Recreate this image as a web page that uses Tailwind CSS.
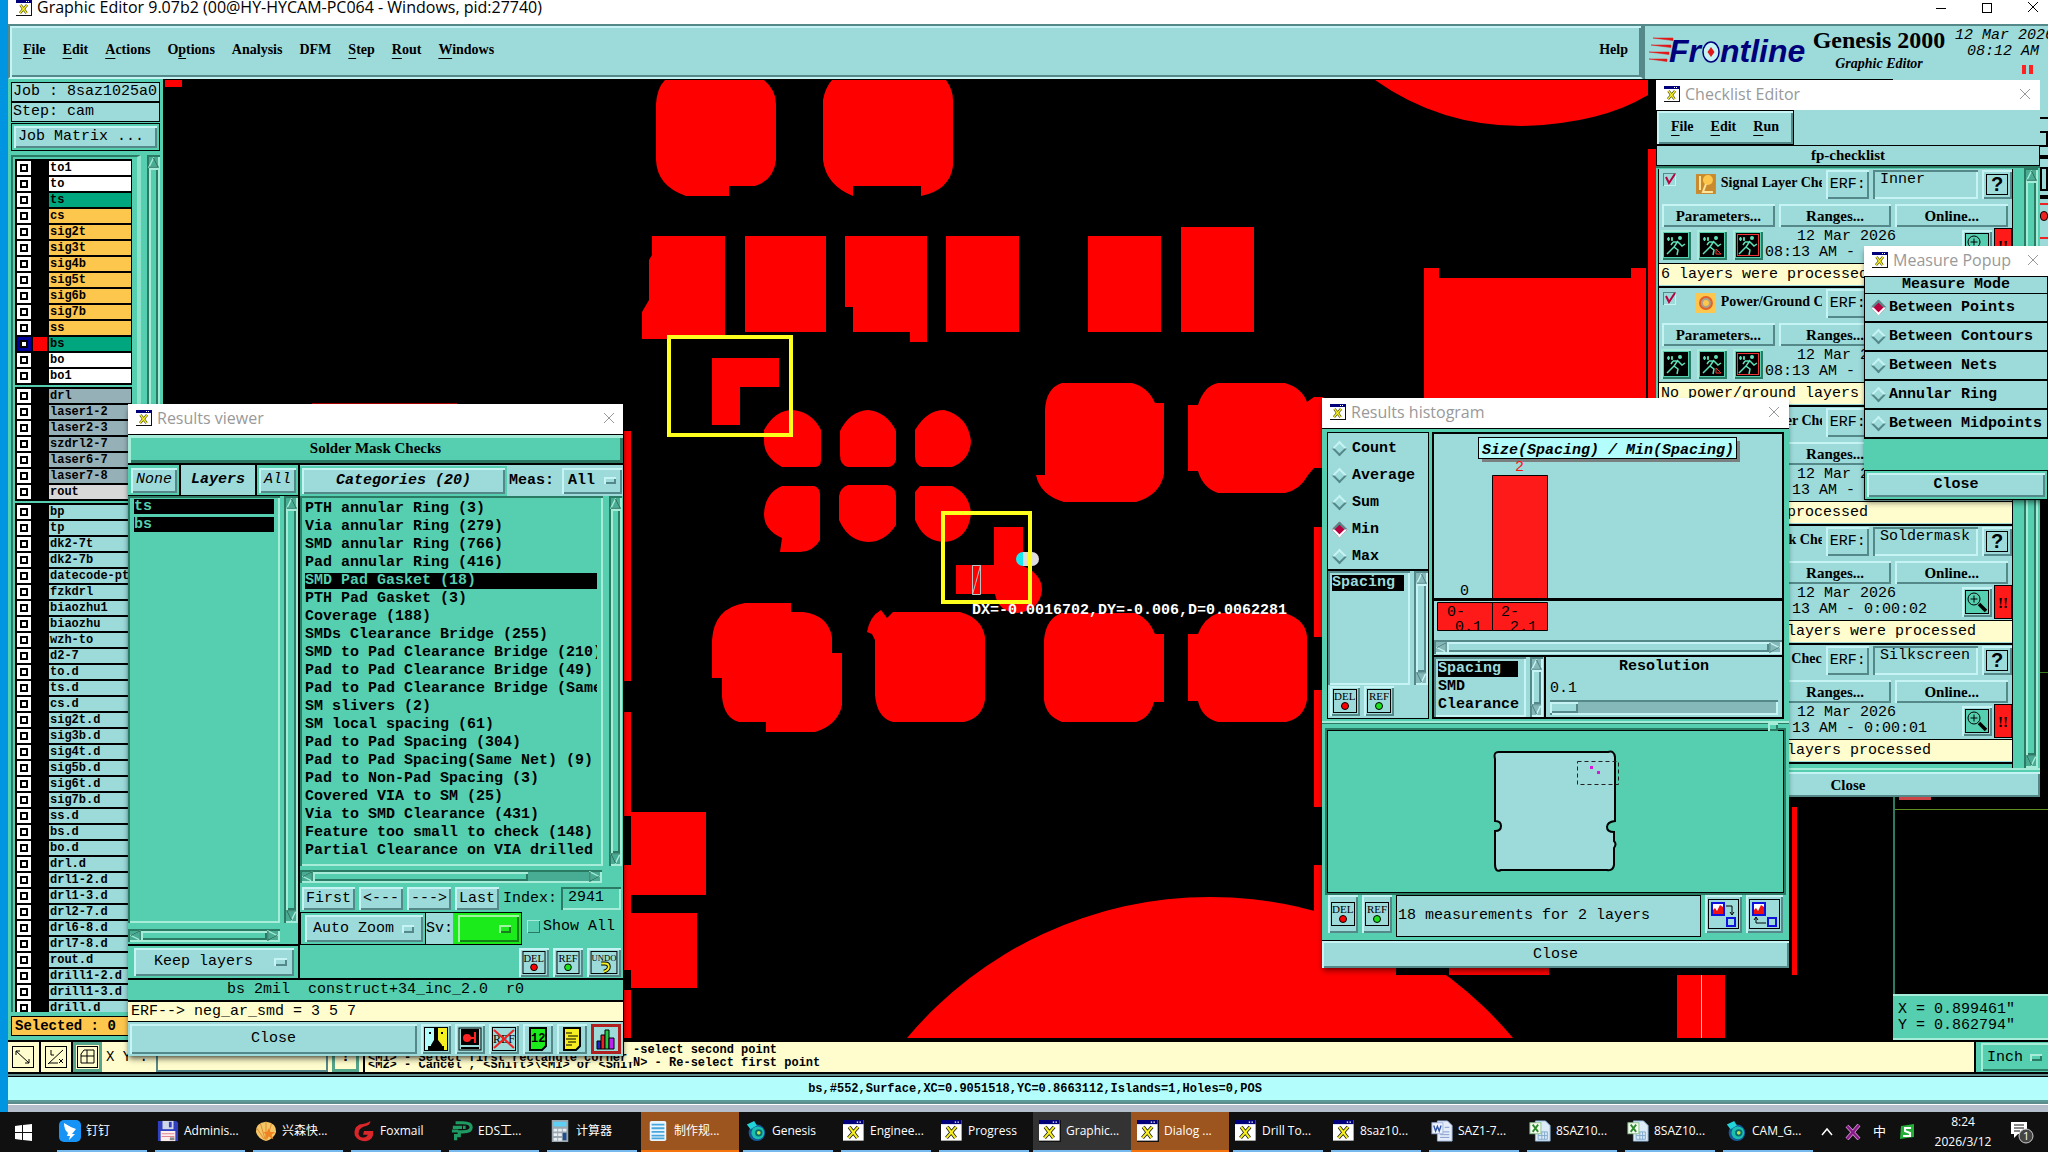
<!DOCTYPE html>
<html lang="en">
<head>
  <meta charset="UTF-8" />
  <meta name="viewport" content="width=device-width, initial-scale=1.0"/>
  <title>Graphic Editor 9.07b2</title>
  <script src="https://cdn.jsdelivr.net/npm/@tailwindcss/browser@4"></script>
</head>
<body class="relative flex h-screen flex-col overflow-hidden bg-[#0095e0] font-['Liberation_Mono',monospace] text-[15px] leading-[18px] text-black [--up:inset_2px_2px_#c6f3f3,inset_-2px_-2px_#558888] [--down:inset_2px_2px_#558888,inset_-2px_-2px_#c6f3f3] [--gup:inset_2px_2px_#a6ecd9,inset_-2px_-2px_#2a7a64] [--gdown:inset_2px_2px_#2a7a64,inset_-2px_-2px_#a6ecd9]">

  <!-- Shared icons -->
  <svg class="hidden">
    <symbol id="xwin" viewBox="0 0 16 16">
      <rect width="16" height="16" fill="#111"/><rect x="0" y="0" width="15" height="15" fill="#fff"/>
      <rect width="15" height="3" fill="#00007b"/><path d="M10 1.5h1M12 1.5h1" stroke="#fff"/>
      <path d="M4.500 5l6 8M11 5l-7 8" stroke="#111" stroke-width="2.600"/><path d="M4.500 5l6 8M11 5l-7 8" stroke="#f5ee20" stroke-width="1.600"/>
    </symbol>
    <symbol id="close" viewBox="0 0 12 12"><path d="M1 1l10 10M11 1L1 11" stroke="currentColor" fill="none"/></symbol>
    <symbol id="del" viewBox="0 0 24 24">
      <rect x=".5" y=".5" width="23" height="23" fill="none" stroke="#000"/><text x="1" y="11" font-size="11" font-family="Liberation Serif">DEL</text>
      <circle cx="12" cy="17" r="3.500" fill="#f00" stroke="#000"/>
    </symbol>
    <symbol id="ref" viewBox="0 0 24 24">
      <rect x=".5" y=".5" width="23" height="23" fill="none" stroke="#000"/><text x="2" y="11" font-size="11" font-family="Liberation Serif">REF</text>
      <circle cx="12" cy="17" r="3.500" fill="#1ee01e" stroke="#000"/>
    </symbol>
    <symbol id="undo" viewBox="0 0 28 24">
      <rect x=".5" y=".5" width="27" height="23" fill="none" stroke="#000"/><text x="1" y="10" font-size="9" font-family="Liberation Serif">UNDO</text>
      <path d="M11 13h4q4 0 4 3.500t-5 5" fill="none" stroke="#000" stroke-width="4"/><path d="M11 13h4q4 0 4 3.500t-5 5" fill="none" stroke="#f5ee20" stroke-width="2"/>
    </symbol>
    <symbol id="magnify" viewBox="0 0 24 24">
      <rect x=".5" y=".5" width="23" height="23" fill="#55cfb0" stroke="#000"/>
      <circle cx="9" cy="9" r="6" fill="none" stroke="#000"/><path d="M9 5.500v7M5.500 9h7" stroke="#000"/><path d="M14 14l7 7" stroke="#000" stroke-width="3.500"/>
    </symbol>
    <symbol id="runner" viewBox="0 0 24 24">
      <circle cx="16" cy="5" r="2" fill="#5fe0b8"/>
      <path d="M14 8l-4 6 4 3-1 5M10 14l-3 3-4 4M9 9l5 0 4 4 3-2M9 9l-2 3M3 6h3M7 6h2M4.500 4v4M8 4v4" fill="none" stroke="#5fe0b8" stroke-width="1.500"/>
    </symbol>
    <symbol id="genesis" viewBox="0 0 24 24">
      <circle cx="13" cy="14" r="9" fill="#155a9a"/><circle cx="14" cy="14" r="7" fill="#19c0b0"/><circle cx="15" cy="14" r="4" fill="#0c6a70"/>
      <circle cx="15" cy="14" r="2" fill="#b7e84a"/><path d="M2 5l8-4 3 5-7 4z" fill="#22d3d8"/>
    </symbol>
    <symbol id="xls" viewBox="0 0 24 24">
      <path d="M7 1h11l5 5v17H7z" fill="#dcebf8" stroke="#8fb4d8"/><path d="M10 13h10v8H10zM10 17h10M14 13v8M17 13v8" fill="none" stroke="#7ea6cc"/>
      <rect x="1" y="3" width="12" height="12" fill="#f3fbf0" stroke="#8cc08c"/><path d="M4 5l6 8M10 5l-6 8" stroke="#2d8a2d" stroke-width="2"/>
    </symbol>
    <symbol id="doc" viewBox="0 0 24 24">
      <path d="M7 1h11l5 5v17H7z" fill="#e4ecfa" stroke="#9fb4dc"/><path d="M10 13h10M10 16h10M10 19h10M15 8h5" stroke="#7d97cc"/>
      <rect x="1" y="3" width="12" height="12" fill="#eef3ff" stroke="#9fb4dc"/><path d="M3 6l2 6 2-5 2 5 2-6" fill="none" stroke="#2f56a8" stroke-width="1.500"/>
    </symbol>
    <symbol id="ding" viewBox="0 0 22 22"><rect width="22" height="22" rx="5" fill="#1793f5"/><path d="M5 3q6 4 12 6l-4 5h3l-6 6 1-4H8l1-3q-4-3-4-10z" fill="#fff"/></symbol>
    <symbol id="floppy" viewBox="0 0 24 24"><path d="M1 1h20l2 2v20H1z" fill="#2f3fc0"/><rect x="6" y="1" width="12" height="9" fill="#cfd6e8"/><rect x="13" y="2" width="3" height="6" fill="#2f3fc0"/><rect x="4" y="12" width="16" height="11" fill="#fbeeee"/><path d="M5 15h14M5 18h14" stroke="#e07a8a"/><rect x="14" y="19" width="5" height="3" fill="#888"/></symbol>
    <symbol id="shell" viewBox="0 0 24 24"><path d="M12 2q11 1 11 11-2 7-11 10Q3 20 1 13 1 3 12 2z" fill="#f6c566"/><path d="M12 2v20M6 4l5 17M18 4l-5 17M2 9l8 12" stroke="#d98a2c" fill="none"/><path d="M15 9l2 4 5 0-4 3 2 5-5-3-4 3 1-5-3-3h4z" fill="#f08322"/></symbol>
    <symbol id="fox" viewBox="0 0 24 24"><path d="M19 1q0 5-7 6-6 2-6 8 1 5 6 4 4-1 4-3h-5l1-4h10q1 9-7 11-9 1-13-6Q0 9 7 5q8-1 12-4z" fill="#d8262a"/></symbol>
    <symbol id="eds" viewBox="0 0 24 24"><path d="M5 3h8q9 0 9 5t-9 5H9v4H5v5M2 8h10M1 12h7M13 8h3" fill="none" stroke="#1f9a62" stroke-width="3.500"/></symbol>
    <symbol id="calc" viewBox="0 0 18 24"><rect width="18" height="24" fill="#9aa7b1"/><rect x="2" y="2" width="14" height="5" fill="#5ed0f5"/><path d="M2 11h4M7 11h4M12 11h4M2 16h4M7 16h4M2 21h4M7 21h4" stroke="#e8eef2" stroke-width="3"/><path d="M12 14h4v8h-4z" fill="#1f4f8a"/></symbol>
    <symbol id="note" viewBox="0 0 20 24"><rect x="1" y="1" width="18" height="22" rx="2" fill="#eaf6ff"/><path d="M3 5h14M3 9h14M3 13h14M3 17h14M3 20h14" stroke="#49a6dc" stroke-width="2"/></symbol>
  </svg>

  <!-- Main window -->
  <div class="ml-2 flex min-h-0 flex-1 flex-col bg-black">
    <header class="flex h-6 shrink-0 items-start bg-white font-['Open_Sans',sans-serif]">
      <svg class="ml-2 size-4"><use href="#xwin"/></svg>
      <h1 class="ml-[5px] text-base leading-[14px]">Graphic Editor 9.07b2 (00@HY-HYCAM-PC064 - Windows, pid:27740)</h1>
      <div class="ml-auto flex gap-[34px] pr-[9px]">
        <button aria-label="Minimize"><svg class="size-3" viewBox="0 0 12 12"><path d="M1 7.500h10" stroke="#000"/></svg></button>
        <button aria-label="Maximize"><svg class="size-3" viewBox="0 0 12 12"><rect x="1.500" y="2.500" width="9" height="9" fill="none" stroke="#000"/></svg></button>
        <button aria-label="Close"><svg class="mt-px size-3"><use href="#close"/></svg></button>
      </div>
    </header>

    <div class="flex h-[55px] shrink-0 bg-[#9ddada] font-['Liberation_Serif',serif] font-bold">
      <nav class="flex flex-1 items-center gap-[17px] border-2 border-[#558888] border-b-[#c6f3f3] px-[13px] pb-[3px] text-sm [box-shadow:var(--up)]">
        <button><u class="underline-offset-4">F</u>ile</button>
        <button><u class="underline-offset-4">E</u>dit</button>
        <button><u class="underline-offset-4">A</u>ctions</button>
        <button>O<u class="underline-offset-4">p</u>tions</button>
        <button>Analysis</button>
        <button>DFM</button>
        <button><u class="underline-offset-4">S</u>tep</button>
        <button><u class="underline-offset-4">R</u>out</button>
        <button><u class="underline-offset-4">W</u>indows</button>
        <button class="ml-auto">Help</button>
      </nav>
      <div class="flex w-[405px] shrink-0 overflow-hidden border-t-2 border-l-2 border-[#558888] pl-1">
        <svg class="mt-[6px] h-9 w-[162px] shrink-0" viewBox="0 0 162 36">
          <path d="M4 6h20v2.500zM2 13h20v2.500zM0 20h20v2.500zM0 27h18v2.500z" fill="#e01818" stroke="#e01818" stroke-width=".5"/>
          <g font-family="Liberation Sans" font-weight="bold" font-style="italic" font-size="32" fill="#00007b">
            <text x="20" y="30">Fr</text><text x="71" y="30">ntline</text>
          </g>
          <ellipse cx="62" cy="20" rx="8" ry="10" fill="#c6f3f3" stroke="#00007b" stroke-width="1.500"/><path d="M62 15l3.500 5-3.500 5-3.500-5z" fill="#e01818"/>
        </svg>
        <div class="w-[136px] shrink-0 text-center">
          <p class="text-2xl leading-7 whitespace-nowrap">Genesis 2000</p>
          <p class="text-sm leading-5 italic">Graphic Editor</p>
        </div>
        <div class="ml-2 w-[97px] shrink-0 pt-px font-['Liberation_Mono',monospace] leading-4 font-normal italic">
          <p class="mt-px whitespace-nowrap">12 Mar 2026</p>
          <p class="pl-3">08:12 AM</p>
          <div class="ml-[67px] mt-[5px] flex gap-[3px]"><span class="h-[9px] w-1 bg-[#f22]"></span><span class="h-[9px] w-1 bg-[#f22]"></span></div>
        </div>
      </div>
    </div>

    <div class="flex min-h-0 flex-1">
      <!-- Layer list -->
      <aside class="flex w-[155px] shrink-0 flex-col bg-[#55cfb0] px-[3px] pt-[3px]">
        <p class="h-5 border border-black bg-[#9ddada] pl-px">Job : 8saz1025a0</p>
        <p class="h-5 border border-black bg-[#9ddada] pl-px">Step: cam</p>
        <div class="mt-px border border-black p-[2px]">
          <button class="block h-[22px] w-full bg-[#9ddada] pl-1 text-left [box-shadow:var(--up)]">Job Matrix ...</button>
        </div>
        <div class="mt-1 flex min-h-0 flex-1">
          <div class="min-h-0 w-[131px] overflow-hidden border-t-2 border-r-4 border-l-2 border-t-[#2a7a64] border-r-[#8be3cb] border-l-[#2a7a64] pt-[2px] pr-[5px] pl-[2px]">
            <div id="layers" class="text-xs leading-[14px] font-bold"></div>
          </div>
          <div data-bar="gv" data-fill="100" class="ml-[6px] w-[13px]"></div>
        </div>
        <p class="my-1 h-5 border border-black bg-[#fdc64d] pl-[3px] text-sm leading-[18px] font-bold">Selected : 0</p>
      </aside>

      <!-- Artwork -->
      <div class="relative min-w-0 flex-1 overflow-hidden bg-black">
        <svg class="h-[959px] w-[1730px]" viewBox="163 79 1730 959" fill="#f00">
          <rect x="165" y="80" width="17" height="7"/>
          <rect x="312" y="403" width="145" height="3" fill="#a00"/>
          <path d="M665 80H764Q776 90 776 104V160Q774 180 755 186H729V196H686Q657 186 656 160V104Q657 88 665 80z"/>
          <path d="M832 80H946Q953 90 953 100V166Q950 190 921 196V186H853V196Q826 185 823 160V100Q825 88 832 80z"/>
          <path d="M652 236H725V339H642V312L649 300V260L652 255z"/>
          <path d="M745 236h81v96h-81zM946 236h73v96h-73zM1088 236h73v96h-73zM1181 227h73v105h-73z"/>
          <path d="M845 236H927V342H910V332H853V307H845z"/>
          <path d="M712 358H779V387H740V425H712z"/>
          <path d="M793 410Q812 412 821 430V460Q821 467 815 467H782Q764 457 764 441V430Q775 410 793 410z"/>
          <path d="M868 410Q887 412 896 431V460Q894 467 888 467H848Q840 465 840 455V431Q850 411 868 410z"/>
          <path d="M944 410Q968 416 971 441Q970 460 952 467H922Q915 465 915 456V430Q927 410 944 410z"/>
          <path d="M782 486H814Q820 488 820 494V540Q813 552 800 552H780L782 538Q764 530 764 514Q765 493 782 486z"/>
          <path d="M848 485H887Q896 487 896 496V525Q885 542 868 542Q850 541 841 524L839 520V496Q840 488 848 485z"/>
          <path d="M920 486H952Q970 494 971 514Q968 540 944 542Q925 541 917 524L915 520V492z"/>
          <path d="M1062 383H1132Q1148 387 1155 403H1164V474Q1160 495 1136 502H1064Q1040 495 1036 475H1045V410Q1046 388 1062 383z"/>
          <path d="M1218 383H1285Q1302 388 1307 402L1314 397H1323V468H1314L1308 475Q1300 490 1285 493H1218Q1203 488 1198 471H1188V405H1198Q1204 386 1218 383z"/>
          <path d="M745 603H791V612H803Q828 615 832 637V653H842V705Q838 725 815 732H766V722H739Q724 718 722 697V678H712V640Q714 608 745 603z"/>
          <path d="M881 610L887 618L893 612H960Q982 618 985 637V700Q982 718 964 722H893Q877 718 875 695V640L872 634L867 632Q870 616 881 610z"/>
          <path d="M1062 613H1136Q1150 620 1155 634H1164V702H1154Q1150 718 1136 722H1062Q1046 716 1044 700V640Q1046 618 1062 613z"/>
          <path d="M1218 613H1285Q1306 620 1307 637V700Q1304 718 1286 722H1218Q1202 718 1198 701H1188V634H1198Q1204 618 1218 613z"/>
          <path d="M994 527H1023V566Q1042 574 1042 590Q1040 610 1018 613Q998 612 995 594H956V565H994z"/>
          <path d="M623 431h8v250h-8zM623 712h8v104h-8zM623 865h8v105h-8zM623 990h8v48h-8zM631 812h75v83h-75zM631 913h66v75h-66z"/>
          <path d="M1314 527h10v110h-10zM1314 690h10v117h-10zM1314 865h10v60h-10z"/>
          <path d="M1375 80Q1440 126 1521 126Q1600 124 1648 95V80z"/>
          <path d="M1648 149h8v260h-8zM1424 268H1439V278H1631V268H1646V420H1424z"/>
          <path d="M907 1038A396 396 0 0 1 1513 1038z"/>
          <rect x="1396" y="960" width="52" height="15" fill="#000"/>
          <path d="M1449 960h100v15h-100zM1792 807h5v168h-5zM1677 975h48v63h-48z"/>
          <path d="M1701.500 975v63" stroke="#ccd"/>
          <path d="M1023 552h9a7 7 0 0 1 0 14h-9z" fill="#ddd"/><path d="M1023 552v14a7 7 0 0 1 0-14z" fill="#18e8f0"/>
          <path d="M972.500 565.500h8v29h-8zl8 0l-8 29" fill="none" stroke="#b9c4c4"/>
          <g fill="none" stroke="#ffff1e" stroke-width="4"><rect x="669" y="337" width="122" height="98"/><rect x="943" y="513" width="87" height="89"/></g>
          <text x="972" y="614" fill="#fff" font-size="15" font-weight="bold">DX=-0.0016702,DY=-0.006,D=0.0062281</text>
        </svg>
      </div>

      <!-- Tool column and overview -->
      <aside class="flex w-[155px] shrink-0 flex-col">
        <div class="h-[400px] bg-[#9ddada]">
          <div class="h-10 border-b-2 border-black"></div>
          <div class="h-10 border-b-4 border-black pt-3 text-right"><span class="inline-block h-4 w-5 border-2 border-black"></span></div>
          <div class="h-10 border-b-4 border-black pt-2 text-right"><span class="inline-block h-6 w-2 border-2 border-black"></span></div>
          <div class="mt-1 h-9 border-y-2 border-[#e22] bg-[#9ddada] pt-1 text-right"><span class="inline-block h-[10px] w-2 rounded-full border border-black bg-[#e22]"></span></div>
        </div>
        <div class="flex flex-1 flex-col border-l-2 border-[#2a7a64]">
          <div class="h-[194px] border-b border-[#3c7a1e]"></div>
          <div class="h-[137px] border-b border-[#5f8f1e] pt-[124px]"><span class="ml-1 block h-[3px] w-8 bg-[#c44]"></span></div>
        </div>
        <div class="h-[46px] bg-[#55cfb0] pt-2 pl-[5px] leading-4 whitespace-nowrap [box-shadow:inset_0_2px_#a6ecd9,inset_0_-2px_#a6ecd9]">
          <p>X = 0.899461"</p>
          <p>Y = 0.862794"</p>
        </div>
      </aside>
    </div>

    <!-- Command line -->
    <div class="flex h-[34px] shrink-0 border-y-2 border-black bg-[#fffdcd] text-xs leading-[13px] font-bold">
      <button aria-label="Pan" class="w-[33px] border-r-2 border-black p-1"><svg class="h-[22px] w-6" viewBox="0 0 24 22"><rect x=".5" y=".5" width="21" height="21" fill="none" stroke="#000"/><path d="M4 5l13 12M4 9V5h4M17 13v4h-4" fill="none" stroke="#000"/></svg></button>
      <button aria-label="Delta" class="w-8 border-r-2 border-black p-1"><svg class="h-[22px] w-6" viewBox="0 0 24 22"><rect x=".5" y=".5" width="21" height="21" fill="none" stroke="#000"/><path d="M3 18L18 4M6 4v5h3M4 17h9M14 13l4 4M18 13l-4 4" fill="none" stroke="#000"/></svg></button>
      <button aria-label="Grid" class="w-[29px] bg-[#fffdcd] p-1 [box-shadow:inset_0_0_0_3px_#55a58b]"><svg class="size-[22px]" viewBox="0 0 22 22"><rect x=".5" y=".5" width="20" height="21" fill="none" stroke="#000"/><path d="M7 4h10v13H4V8zM4 10h13M10 4v13" fill="none" stroke="#000"/></svg></button>
      <label for="xy" class="self-center px-1 text-sm font-normal">X Y :</label>
      <input id="xy" class="ml-1 h-full w-[172px] border-2 border-[#558888] bg-[#fffdcd]" />
      <button class="mx-1 w-[27px] border-3 border-[#55a58b] text-base">!</button>
      <div class="w-[270px] shrink-0 overflow-hidden border-l-2 border-black pt-[10px] pl-[3px] whitespace-nowrap">
        <p class="h-[10px] overflow-hidden">&lt;M1&gt; - Select first rectangle corner</p>
        <p class="h-2 overflow-hidden leading-[6px]">&lt;M2&gt; - Cancel , &lt;Shift&gt;\&lt;M1&gt; or &lt;Shift&gt;\</p>
      </div>
      <div class="flex-1 pt-[2px] whitespace-nowrap">
        <p>-select second point</p>
        <p>N&gt; - Re-select first point</p>
      </div>
      <div class="flex w-[74px] items-center border-l-2 border-black bg-[#55cfb0] pl-[5px]">
        <div class="flex h-7 w-[78px] shrink-0 items-center pl-[6px] [box-shadow:var(--gup)]">
          <select aria-label="Units" class="w-[43px] appearance-none text-[15px] font-normal"><option>Inch</option></select>
          <span class="h-[7px] w-3 bg-[#55cfb0] [box-shadow:var(--gup)]"></span>
        </div>
      </div>
    </div>
    <p class="h-[30px] shrink-0 border-y-2 border-[#5c8c8c] bg-[#b4fdfd] pl-[14px] text-center text-xs leading-[27px] font-bold [box-shadow:inset_0_1px_#000,inset_0_-2px_#5c9a98]">bs,#552,Surface,XC=0.9051518,YC=0.8663112,Islands=1,Holes=0,POS</p>
    <div class="h-2 shrink-0 border-t border-white bg-[#b5bfcb]"></div>
  </div>

  <!-- Taskbar -->
  <footer class="flex h-10 shrink-0 items-stretch bg-[#101010] font-['Open_Sans','Noto_Sans_CJK_SC',sans-serif] text-xs text-white">
    <button aria-label="Start" class="w-[53px] shrink-0 pl-[15px]"><svg class="size-[17px]" viewBox="0 0 17 17"><path d="M0 2l7-1v7H0zM8 1l9-1v8H8zM0 9h7v7l-7-1zM8 9h9v8l-9-1z" fill="#fff"/></svg></button>
    <div id="tasks" class="flex min-w-0 flex-1 overflow-hidden"></div>
    <div class="flex shrink-0 items-center gap-3 pr-[14px]">
      <svg class="h-3 w-3" viewBox="0 0 12 12"><path d="M1 9l5-6 5 6" fill="none" stroke="#fff" stroke-width="1.500"/></svg>
      <svg class="size-4" viewBox="0 0 16 16"><path d="M2 2l12 13M14 1L2 15" stroke="#c9c" stroke-width="4"/><path d="M2 2l12 13M14 1L2 15" stroke="#8a1a8a" stroke-width="2.500"/></svg>
      <span class="text-[13px]">中</span>
      <svg class="size-[18px]" viewBox="0 0 18 18"><path d="M3 3l13-2v13L2 16z" fill="#25b03a"/><path d="M13 5H7v3l5 2v3H5" fill="none" stroke="#fff" stroke-width="2"/></svg>
      <div class="w-[70px] text-center leading-5"><p>8:24</p><p>2026/3/12</p></div>
      <svg class="size-6" viewBox="0 0 24 24"><path d="M1 2h16v12H8l-4 4v-4H1z" fill="#fff"/><path d="M4 5h10M4 8h10M4 11h6" stroke="#101010"/><circle cx="16" cy="16" r="7" fill="#444" stroke="#ccc"/><text x="13" y="20" font-size="11" fill="#fff">1</text></svg>
    </div>
  </footer>

  <!-- Checklist Editor -->
  <section class="absolute top-20 left-[1656px] w-[384px] bg-[#55cfb0] font-['Liberation_Serif',serif]">
    <div class="flex h-[30px] items-center bg-white pr-[9px] pb-[2px] pl-2 font-['Open_Sans',sans-serif] text-[#999]">
      <svg class="size-4"><use href="#xwin"/></svg><h2 class="ml-[5px] text-base">Checklist Editor</h2>
      <button aria-label="Close" class="ml-auto"><svg class="size-3"><use href="#close"/></svg></button>
    </div>
    <div class="h-[35px] bg-[#9ddada]">
      <nav class="flex h-[35px] w-[138px] items-center gap-[17px] border border-black pb-px pl-[14px] text-sm font-bold [box-shadow:var(--up)]">
        <button><u class="underline-offset-4">F</u>ile</button><button><u class="underline-offset-4">E</u>dit</button><button><u class="underline-offset-4">R</u>un</button>
      </nav>
    </div>
    <p class="h-[21px] border border-black bg-[#9ddada] text-center leading-[18px] font-bold">fp-checklist</p>
    <div class="flex h-[602px] border-t-2 border-[#2a7a64]">
      <div id="checks" class="mt-px mr-[11px] ml-[2px] w-[355px] border-x border-black"></div>
      <div data-bar="gv" data-fill="100" class="w-[14px]"></div>
    </div>
    <div class="border-t-2 border-[#a6ecd9] pt-[2px]">
      <button class="block h-[25px] w-full bg-[#9ddada] font-bold [box-shadow:var(--up)]">Close</button>
    </div>
  </section>

  <!-- Measure Popup -->
  <section class="absolute top-[246px] left-[1864px] w-[184px] bg-[#55cfb0] font-bold shadow-md shadow-black/40">
    <div class="flex h-[30px] items-center bg-white pr-[9px] pb-[2px] pl-2 font-['Open_Sans',sans-serif] font-normal text-[#999]">
      <svg class="size-4"><use href="#xwin"/></svg><h2 class="ml-[5px] text-base">Measure Popup</h2>
      <button aria-label="Close" class="ml-auto"><svg class="size-3"><use href="#close"/></svg></button>
    </div>
    <p class="h-[18px] border border-black bg-[#9ddada] text-center leading-4">Measure Mode</p>
    <div id="modes"></div>
    <div class="mt-[31px] border border-black p-[2px]">
      <button class="block h-6 w-full bg-[#9ddada] [box-shadow:var(--up)]">Close</button>
    </div>
  </section>

  <!-- Results histogram -->
  <section class="absolute top-[398px] left-[1322px] w-[467px] bg-[#55cfb0] shadow-md shadow-black/40">
    <div class="flex h-[30px] items-center bg-white pr-[9px] pb-[2px] pl-2 font-['Open_Sans',sans-serif] text-[#999]">
      <svg class="size-4"><use href="#xwin"/></svg><h2 class="ml-[5px] text-base">Results histogram</h2>
      <button aria-label="Close" class="ml-auto"><svg class="size-3"><use href="#close"/></svg></button>
    </div>
    <div class="flex h-[293px] gap-[3px] border-t border-black px-[5px] pt-[3px] pb-[2px]">
      <div class="flex w-[102px] flex-col border border-black bg-[#9ddada]">
        <div id="stats" class="h-[138px] border-b-2 border-black pt-[2px] font-bold"></div>
        <div class="flex h-[114px]">
          <ul class="mr-1 w-[82px] pt-[4px] pl-1 font-bold [box-shadow:var(--down)]"><li class="h-4 w-[72px] bg-black leading-4 text-[#9ddada]">Spacing</li></ul>
          <div data-bar="tv" data-fill="100" class="w-[14px]"></div>
        </div>
        <div class="flex gap-1 pt-px pl-[2px]">
          <button aria-label="Delete" class="bg-[#9ddada] p-[3px] [box-shadow:var(--up)]"><svg class="size-6"><use href="#del"/></svg></button>
          <button aria-label="Reference" class="bg-[#9ddada] p-[3px] [box-shadow:var(--up)]"><svg class="size-6"><use href="#ref"/></svg></button>
        </div>
      </div>
      <div class="flex min-w-0 flex-1 flex-col border-2 border-black bg-[#9ddada]">
        <svg class="h-[203px] w-full" viewBox="1434 434 348 203">
          <rect x="1482" y="441" width="258" height="21" fill="#7a8080"/><rect x="1478.500" y="437.500" width="258" height="21" fill="#b4fdfd" stroke="#000"/>
          <text x="1482" y="454" font-size="15" font-weight="bold" font-style="italic">Size(Spacing) / Min(Spacing)</text>
          <text x="1515" y="471" font-size="15" fill="#f11">2</text><text x="1460" y="595" font-size="15">0</text>
          <g fill="#ff1a1a" stroke="#000"><path d="M1492.500 475.500h55v124h-55zM1437.500 602.500h55v28h-55zM1492.500 602.500h55v28h-55z"/></g>
          <path d="M1432 598h360v3h-360z" fill="#000"/>
          <g font-size="15"><text x="1447" y="616">0-</text><text x="1455" y="631">0.1</text><text x="1501" y="616">2-</text><text x="1510" y="631">2.1</text></g>
        </svg>
        <div data-bar="th" data-fill="100" class="mt-[3px] h-[14px]"></div>
        <div class="mt-px flex h-[62px] border-t-2 border-black">
          <ul class="mr-1 w-[92px] pt-1 pl-1 font-bold [box-shadow:var(--down)]">
            <li class="h-4 w-20 bg-black leading-4 text-[#9ddada]">Spacing</li><li class="mt-px">SMD</li><li>Clearance</li>
          </ul>
          <div data-bar="tv" data-fill="100" class="w-[13px]"></div>
          <div class="ml-px flex-1 border-l-2 border-black px-1 font-bold">
            <label for="res" class="block text-center leading-5">Resolution</label>
            <p class="mt-[3px] font-normal">0.1</p>
            <input id="res" type="range" value="0" class="mt-[2px] block h-[15px] w-full appearance-none bg-[#85b8b8] [box-shadow:var(--down)] [&::-webkit-slider-thumb]:h-[11px] [&::-webkit-slider-thumb]:w-7 [&::-webkit-slider-thumb]:appearance-none [&::-webkit-slider-thumb]:bg-[#9ddada] [&::-webkit-slider-thumb]:[box-shadow:var(--up)]" />
          </div>
        </div>
      </div>
    </div>
    <div class="flex h-[9px] items-center justify-end border-t-2 border-[#a6ecd9] pr-[11px] [box-shadow:inset_0_1px_#2a7a64]"><span class="h-2 w-[10px] bg-[#55cfb0] [box-shadow:var(--gup)]"></span></div>
    <div class="mx-[5px] flex h-[163px] justify-center border border-black [box-shadow:0_0_0_2px_#2a7a64]">
      <svg class="h-full w-[140px]" viewBox="1486 731 140 161">
        <path d="M1500 752h108q6-2 7 5v64q-8 1-8 6t7 5v9q3 3 0 7v17q-1 6-7 5h-106q-6 3-6-6v-33q6 0 6-5t-6-5v-62q-2-8 5-7z" fill="#9ddada" stroke="#000" stroke-width="2"/>
        <rect x="1577.500" y="761.500" width="41" height="23" fill="none" stroke="#222" stroke-dasharray="4 3"/>
        <path d="M1590 766h3v3h-3zM1597 771h3v3h-3z" fill="#d818d8"/>
      </svg>
    </div>
    <div class="flex h-[47px] gap-1 px-[6px] pt-[2px]">
      <button aria-label="Delete" class="h-[38px] w-[30px] bg-[#9ddada] pl-[3px] [box-shadow:var(--up)]"><svg class="size-6"><use href="#del"/></svg></button>
      <button aria-label="Reference" class="h-[38px] w-[30px] bg-[#9ddada] pl-[3px] [box-shadow:var(--up)]"><svg class="size-6"><use href="#ref"/></svg></button>
      <p class="h-[42px] flex-1 border border-black bg-[#9ddada] pl-px leading-10">18 measurements for 2 layers</p>
      <button aria-label="Export" class="h-[38px] w-[37px] bg-[#9ddada] pl-[3px] [box-shadow:var(--up)]"><svg class="h-[30px] w-[31px]" viewBox="0 0 31 30"><rect x=".5" y=".5" width="30" height="29" fill="none" stroke="#000"/><rect x="4" y="4" width="12" height="12" fill="#fff" stroke="#11d" stroke-width="2"/><path d="M5 15v-4l2-2 2 3 3-6 3 2v7z" fill="#e11"/><rect x="19" y="19" width="8" height="8" fill="#9ddada" stroke="#11d" stroke-width="2"/><path d="M18 7h6v8M22 13l2 3 2-3" fill="none" stroke="#000"/></svg></button>
      <button aria-label="Import" class="h-[38px] w-[37px] bg-[#9ddada] pl-[3px] [box-shadow:var(--up)]"><svg class="h-[30px] w-[31px]" viewBox="0 0 31 30"><rect x=".5" y=".5" width="30" height="29" fill="none" stroke="#000"/><rect x="4" y="4" width="12" height="12" fill="#fff" stroke="#11d" stroke-width="2"/><path d="M5 15v-4l2-2 2 3 3-6 3 2v7z" fill="#e11"/><rect x="19" y="19" width="8" height="8" fill="#9ddada" stroke="#11d" stroke-width="2"/><path d="M17 24H7v-5M5 21l2-3 2 3" fill="none" stroke="#000"/></svg></button>
    </div>
    <button class="block h-[28px] w-full border-t border-black bg-[#9ddada] [box-shadow:var(--up)]">Close</button>
  </section>

  <!-- Results viewer -->
  <section class="absolute top-[404px] left-32 w-[496px] border-r border-black bg-[#55cfb0] shadow-md shadow-black/50">
    <div class="flex h-[30px] items-center bg-white pr-[8px] pb-[2px] pl-2 font-['Open_Sans',sans-serif] text-[#999]">
      <svg class="size-4"><use href="#xwin"/></svg><h2 class="ml-[5px] text-base">Results viewer</h2>
      <button aria-label="Close" class="ml-auto"><svg class="size-3"><use href="#close"/></svg></button>
    </div>
    <p class="h-[31px] border-t border-b-2 border-black text-center font-['Liberation_Serif',serif] leading-[27px] font-bold [box-shadow:inset_3px_3px_#a6ecd9,inset_-3px_-3px_#2a7a64]">Solder Mask Checks</p>
    <div class="flex h-[515px] border-b-2 border-black">
      <div class="flex w-[172px] shrink-0 flex-col border-r-2 border-black">
        <div class="flex h-[31px] items-center border-b border-black pl-[3px] italic">
          <button class="h-[25px] w-[46px] bg-[#9ddada] [box-shadow:var(--up)]">None</button>
          <span class="mx-[2px] h-full w-[78px] border-x-2 border-black bg-[#9ddada] text-center leading-[30px] font-bold">Layers</span>
          <button class="h-[25px] w-[37px] bg-[#9ddada] [box-shadow:var(--up)]">All</button>
        </div>
        <div class="flex h-[430px]">
          <ul class="mr-1 w-[152px] pt-[3px] pl-[6px] font-bold text-[#55cfb0] [box-shadow:var(--gdown)]">
            <li class="mb-[3px] h-[15px] w-[140px] bg-black leading-[15px]">ts</li>
            <li class="h-[15px] w-[140px] bg-black leading-[15px]">bs</li>
          </ul>
          <div data-bar="gv" data-fill="100" class="w-[14px]"></div>
        </div>
        <div data-bar="gh" data-fill="100" class="mt-[6px] mb-[2px] h-[13px] w-[152px]"></div>
        <div class="flex-1 border-t-2 border-black py-[2px] pr-1 pl-[6px]">
          <div class="flex h-[28px] items-center bg-[#9ddada] pl-5 [box-shadow:var(--up)]">
            <select aria-label="Keep layers" class="w-[120px] appearance-none"><option>Keep layers</option></select>
            <span class="h-2 w-[13px] [box-shadow:var(--up)]"></span>
          </div>
        </div>
      </div>
      <div class="flex min-w-0 flex-1 flex-col">
        <div class="flex h-[31px] items-center bg-[#9ddada]">
          <button class="h-[30px] w-[207px] border-2 border-[#55cfb0] font-bold italic [box-shadow:var(--up)]">Categories (20)</button>
          <label for="meas" class="ml-[2px] font-bold">Meas:</label>
          <div class="ml-2 flex h-[26px] w-[60px] items-center pl-[6px] [box-shadow:var(--up)]">
            <select id="meas" class="w-9 appearance-none font-bold"><option>All</option></select>
            <span class="h-[7px] w-3 [box-shadow:var(--up)]"></span>
          </div>
        </div>
        <div class="flex h-[370px]">
          <ul id="categories" class="mr-[6px] w-[303px] overflow-hidden pt-1 pr-[6px] pl-[5px] font-bold whitespace-nowrap [box-shadow:var(--gdown)]"></ul>
          <div data-bar="gv" data-fill="100" class="w-[13px]"></div>
        </div>
        <div data-bar="gh" data-fill="78" class="mt-1 h-[13px] w-[302px]"></div>
        <div class="mt-[3px] flex h-[25px] items-center gap-1 pl-[2px]">
          <button class="h-[23px] w-[53px] bg-[#9ddada] [box-shadow:var(--up)]">First</button>
          <button class="h-[23px] w-11 bg-[#9ddada] [box-shadow:var(--up)]">&lt;---</button>
          <button class="h-[23px] w-11 bg-[#9ddada] [box-shadow:var(--up)]">---&gt;</button>
          <button class="h-[23px] w-11 bg-[#9ddada] [box-shadow:var(--up)]">Last</button>
          <label for="index">Index:</label>
          <input id="index" value="2941" class="h-[23px] w-[60px] bg-[#55cfb0] pb-[3px] pl-[7px] [box-shadow:var(--gdown)]" />
        </div>
        <div class="mt-px flex h-[33px] items-center">
          <div class="h-full border border-black p-[2px] pl-1">
            <div class="flex h-[27px] w-[118px] items-center bg-[#9ddada] pl-2 [box-shadow:var(--up)]">
              <select aria-label="Zoom mode" class="w-[89px] appearance-none"><option>Auto Zoom</option></select>
              <span class="h-2 w-3 [box-shadow:var(--up)]"></span>
            </div>
          </div>
          <label for="sv" class="h-full border-y border-black bg-[#9ddada] leading-[31px]">Sv:</label>
          <div class="h-full border border-l-0 border-black bg-[#1bea1b] py-[2px] pr-[2px] pl-[5px]">
            <div class="flex h-[27px] w-[61px] items-center pl-[41px] [box-shadow:inset_2px_2px_#a0f5a0,inset_-2px_-2px_#16801a]">
              <select id="sv" class="w-0 appearance-none"><option></option></select><span class="h-2 w-3 [box-shadow:inset_2px_2px_#a0f5a0,inset_-2px_-2px_#16801a]"></span>
            </div>
          </div>
          <label class="ml-[5px] flex items-center gap-[3px] pb-1"><input type="checkbox" class="size-[13px] appearance-none [box-shadow:inset_1px_1px_#a6ecd9,inset_-1px_-1px_#2a7a64]" />Show All</label>
        </div>
        <div class="mt-[3px] mr-[2px] flex justify-end gap-1">
          <button aria-label="Delete" class="h-[29px] bg-[#9ddada] px-[3px] [box-shadow:var(--up)]"><svg class="h-[23px] w-6"><use href="#del"/></svg></button>
          <button aria-label="Reference" class="h-[29px] bg-[#9ddada] px-[3px] [box-shadow:var(--up)]"><svg class="h-[23px] w-6"><use href="#ref"/></svg></button>
          <button aria-label="Undo" class="h-[29px] bg-[#9ddada] px-[3px] [box-shadow:var(--up)]"><svg class="h-[23px] w-7"><use href="#undo"/></svg></button>
        </div>
      </div>
    </div>
    <p class="h-[22px] border-b-2 border-black text-center leading-5 whitespace-pre">bs 2mil  construct+34_inc_2.0  r0</p>
    <p class="h-5 border-b border-black bg-[#fffdcd] pl-[3px] leading-[19px]">ERF--&gt; neg_ar_smd = 3 5 7</p>
    <div class="flex h-[34px] items-center gap-1 bg-[#9ddada] px-[2px]">
      <button class="h-[30px] flex-1 [box-shadow:var(--up)]">Close</button>
      <button aria-label="View" class="p-[3px] [box-shadow:var(--up)]"><svg class="size-6" viewBox="0 0 24 24"><rect width="24" height="24"/><path d="M1 1h9v12l-3 5v5H1z" fill="#b4fdfd"/><path d="M14 1h9v22h-5v-5l-4-5z" fill="#f5ee20"/><path d="M5 5h2v2H5zM17 5h2v2h-2zM4 19h16v4H4z"/></svg></button>
      <button aria-label="Snapshot" class="p-[3px] [box-shadow:var(--up)]"><svg class="size-6" viewBox="0 0 24 24"><rect x="1" y="1" width="22" height="22" fill="#9ddada" stroke="#000"/><rect x="3" y="2" width="18" height="16"/><circle cx="9" cy="11" r="4" fill="#f22"/><path d="M12 11h4M17 5v11" stroke="#f22" stroke-width="2"/><path d="M3 21h18" stroke="#000" stroke-width="2"/></svg></button>
      <button aria-label="Clear reference" class="p-[3px] [box-shadow:var(--up)]"><svg class="size-6" viewBox="0 0 24 24"><rect x=".5" y=".5" width="23" height="23" fill="none" stroke="#000"/><text x="1" y="16" font-size="12" font-family="Liberation Serif">REF</text><path d="M2 3l20 18M22 3L2 21" stroke="#e22" stroke-width="2"/></svg></button>
      <button aria-label="Numbers" class="p-[3px] [box-shadow:var(--up)]"><svg class="size-6" viewBox="0 0 24 24"><path d="M4 1h16v18l-4 4H4z" fill="#1bea1b" stroke="#000" stroke-width="2"/><text x="5" y="15" font-size="12" font-weight="bold">12</text></svg></button>
      <button aria-label="Notes" class="p-[3px] [box-shadow:var(--up)]"><svg class="size-6" viewBox="0 0 24 24"><path d="M4 1h16v18l-4 4H4z" fill="#f5ee20" stroke="#000" stroke-width="2"/><path d="M6 6h6M8 9h10M6 12h10M8 15h8M6 18h6" stroke="#000"/></svg></button>
      <button aria-label="Histogram" class="p-[3px] [box-shadow:inset_0_0_0_3px_#b02020]"><svg class="size-6" viewBox="0 0 24 24"><path d="M3 22v-8h4v8z" fill="#22c" stroke="#000"/><path d="M7 22V8h4v14z" fill="#e22" stroke="#000"/><path d="M11 22V3h4v19z" fill="#2c4" stroke="#000"/><path d="M15 22V11h5v11z" fill="#b2e" stroke="#000"/></svg></button>
    </div>
  </section>

  <script>
    // Layer list: name -> row colour
    const groups = [
      ['to1 to ts cs sig2t sig3t sig4b sig5t sig6b sig7b ss bs bo bo1', 'bg-[#fdc64d]'],
      ['drl laser1-2 laser2-3 szdrl2-7 laser6-7 laser7-8 rout', 'bg-[#96b0b8]'],
      ['bp tp dk2-7t dk2-7b datecode-pt fzkdrl biaozhu1 biaozhu wzh-to d2-7 to.d ts.d cs.d sig2t.d sig3b.d sig4t.d sig5b.d sig6t.d sig7b.d ss.d bs.d bo.d drl.d drl1-2.d drl1-3.d drl2-7.d drl6-8.d drl7-8.d rout.d drill1-2.d drill1-3.d drill.d', 'bg-[#9ddada]']
    ];
    const special = {
      to1: 'bg-white', to: 'bg-white', bo: 'bg-white', bo1: 'bg-white',
      ts: 'bg-[#00a67d]', bs: 'bg-[#00a67d]', rout: 'bg-[#d8d8d8]'
    };
    document.getElementById('layers').innerHTML = groups.map(([names, color]) => `
      <div class="mb-[2px] bg-black p-px">${names.split(' ').map(n => `
        <label class="flex h-4 items-center pl-px">
          <input type="checkbox" class="size-[14px] appearance-none border-3 outline-2 -outline-offset-5 outline-black ${n === 'bs' ? 'border-[#00009b] bg-white' : 'border-white bg-white'}" />
          <span class="mx-[2px] h-[14px] w-[14px] ${n === 'bs' ? 'bg-[#f00]' : 'bg-black'}"></span>
          <span class="h-[14px] flex-1 overflow-hidden pl-px whitespace-nowrap ${special[n] || color}">${n}</span>
        </label>`).join('')}
      </div>`).join('');

    const categories = ['PTH annular Ring (3)', 'Via annular Ring (279)', 'SMD annular Ring (766)', 'Pad annular Ring (416)',
      'SMD Pad Gasket (18)', 'PTH Pad Gasket (3)', 'Coverage (188)', 'SMDs Clearance Bridge (255)',
      'SMD to Pad Clearance Bridge (210)', 'Pad to Pad Clearance Bridge (49)', 'Pad to Pad Clearance Bridge (Same Net)',
      'SM slivers (2)', 'SM local spacing (61)', 'Pad to Pad Spacing (304)', 'Pad to Pad Spacing(Same Net) (9)',
      'Pad to Non-Pad Spacing (3)', 'Covered VIA to SM (25)', 'Via to SMD Clearance (431)',
      'Feature too small to check (148)', 'Partial Clearance on VIA drilled'];
    document.getElementById('categories').innerHTML = categories.map((c, i) =>
      `<li class="overflow-hidden ${i === 4 ? 'my-px h-4 bg-black leading-4 text-[#55cfb0]' : 'h-[18px]'}">${c}</li>`).join('');

    // Motif diamonds
    const radio = (group, name, on) => `
      <input type="radio" name="${group}" ${on ? 'checked' : ''} class="size-[11px] shrink-0 rotate-45 appearance-none border-2 border-[#c6f3f3] border-r-[#558888] border-b-[#558888] checked:border-[#558888] checked:border-r-white checked:border-b-white checked:bg-[#b8003f]" />${name}`;
    document.getElementById('stats').innerHTML = ['Count', 'Average', 'Sum', 'Min', 'Max'].map(n =>
      `<label class="flex h-[27px] items-center gap-[7px] pl-[6px]">${radio('stat', n, n === 'Min')}</label>`).join('');
    document.getElementById('modes').innerHTML = ['Between Points', 'Between Contours', 'Between Nets', 'Annular Ring', 'Between Midpoints'].map((n, i) =>
      `<label class="flex h-[29px] items-center gap-[5px] border-x border-b-2 border-black bg-[#9ddada] pl-2 whitespace-nowrap">${radio('mode', n, i === 0)}</label>`).join('');

    // Checklist actions
    const checks = [
      ['Signal Layer Checks', 'Inner', '6 layers were processed', '0:00:02'],
      ['Power/Ground Checks', 'Inner', 'No power/ground layers', '0:00:00'],
      ['Mixed Layer Checks', 'Outer', '2 layers were processed', '0:00:02'],
      ['Solder Mask Checks', 'Soldermask', '2 solder mask layers were processed', '0:00:02'],
      ['Silk Screen Checks', 'Silkscreen', '2 silk screen layers processed', '0:00:01']
    ];
    const checkIcons = [
      '<rect width="20" height="20" fill="#c98a2e"/><circle cx="12" cy="6" r="5" fill="#fdc64d"/><path d="M4 2v14M10 10l-3 8h10" stroke="#fde49a" stroke-width="2" fill="none"/>',
      '<rect width="20" height="20" fill="#fdc64d"/><circle cx="10" cy="10" r="6" fill="#a9a28c" stroke="#e0622a" stroke-width="2"/><circle cx="10" cy="10" r="3" fill="#fdc64d"/>'
    ];
    const run = extra => `<button aria-label="Run" class="bg-[#55cfb0] p-[3px] [box-shadow:var(--gup)]"><svg class="size-6 bg-black" viewBox="0 0 24 24"><use href="#runner"/>${extra}</svg></button>`;
    document.getElementById('checks').innerHTML = checks.map(([name, erf, msg, time], i) => `
      <div class="h-[119px] border-b-2 border-black bg-[#9ddada]">
        <div class="flex h-[30px] items-start pt-px pl-1">
          <input type="checkbox" id="check${i}" class="mt-[3px] size-[13px] appearance-none [box-shadow:inset_1px_1px_#558888,inset_-1px_-1px_#c6f3f3]" checked />
          <svg class="mt-[3px] -ml-3 size-3" viewBox="0 0 12 12"><path d="M2 4l3 6 6-9" fill="none" stroke="#b8003f" stroke-width="2"/></svg>
          <svg class="mt-1 ml-5 size-5" viewBox="0 0 20 20">${checkIcons[i] || checkIcons[1]}</svg>
          <label for="check${i}" class="mt-1 ml-[5px] h-[18px] w-[102px] overflow-hidden text-sm leading-[18px] font-bold whitespace-nowrap">${name}</label>
          <button class="ml-1 h-[29px] w-[43px] font-['Liberation_Mono',monospace] [box-shadow:var(--up)]">ERF:</button>
          <input aria-label="ERF model" value="${erf}" class="ml-1 h-[29px] w-[105px] pb-[10px] pl-[7px] font-['Liberation_Mono',monospace] [box-shadow:var(--down)]" />
          <button class="ml-1 h-[29px] w-[30px] p-1 font-['Liberation_Sans',sans-serif] text-xl font-bold [box-shadow:var(--up)]"><span class="block border border-black leading-[19px]">?</span></button>
        </div>
        <div class="flex h-7 gap-1 pt-[5px] pr-1 pl-[3px] font-bold">
          <button class="flex-1 [box-shadow:var(--up)]">Parameters...</button>
          <button class="flex-1 [box-shadow:var(--up)]">Ranges...</button>
          <button class="flex-1 [box-shadow:var(--up)]">Online...</button>
        </div>
        <div class="flex h-9 items-center gap-[6px] pl-[2px]">
          ${run('')}${run('<path d="M16 16l5 5h-5z" fill="none" stroke="#e33"/>')}${run('<rect x="1.500" y="1.500" width="21" height="21" fill="none" stroke="#e33"/>')}
          <div class="-ml-1 w-[170px] font-['Liberation_Mono',monospace] leading-4 whitespace-nowrap"><p class="pl-8">12 Mar 2026</p><p>08:13 AM - ${time}</p></div>
          <button aria-label="Show results" class="ml-auto p-[3px] [box-shadow:var(--up)]"><svg class="size-6"><use href="#magnify"/></svg></button>
          <span class="-ml-1 h-[34px] w-[18px] border border-black bg-[#ff1a1a] text-center leading-[34px] font-bold">!!</span>
        </div>
        <p class="h-[22px] border-t border-black bg-[#fffdcd] pl-[2px] font-['Liberation_Mono',monospace] leading-[21px] whitespace-nowrap">${msg}</p>
      </div>`).join('');

    // Motif scroll bars, first letter is the palette and second the direction
    document.querySelectorAll('[data-bar]').forEach(bar => {
      const green = bar.dataset.bar[0] === 'g', vertical = bar.dataset.bar[1] === 'v';
      const [light, dark] = green ? ['#a6ecd9', '#2a7a64'] : ['#c6f3f3', '#558888'];
      const arrow = turn => `<svg class="size-[11px] shrink-0" viewBox="0 0 12 12"><g transform="rotate(${turn} 6 6)"><path d="M6 1L1 11H11z" fill="none" stroke="${light}" stroke-width="1.500"/><path d="M1 11H11L6 1" fill="none" stroke="${dark}" stroke-width="1.500"/></g></svg>`;
      bar.classList.add('flex', 'shrink-0', 'p-[2px]', green ? 'bg-[#48ab93]' : 'bg-[#85b8b8]', vertical ? 'flex-col' : 'flex-row', 'items-center', green ? '[box-shadow:var(--gdown)]' : '[box-shadow:var(--down)]');
      const size = vertical ? `width:100%;height:${bar.dataset.fill}%` : `height:100%;width:${bar.dataset.fill}%`;
      bar.innerHTML = arrow(vertical ? 0 : -90) +
        `<div class="flex min-h-0 min-w-0 flex-1 self-stretch"><span class="${green ? 'bg-[#55cfb0] [box-shadow:var(--gup)]' : 'bg-[#9ddada] [box-shadow:var(--up)]'}" style="${size}"></span></div>` +
        arrow(vertical ? 180 : 90);
    });

    // Taskbar buttons
    const tasks = [['ding', '钉钉'], ['floppy', 'Adminis...'], ['shell', '兴森快...'], ['fox', 'Foxmail'], ['eds', 'EDS工...'], ['calc', '计算器'],
      ['note', '制作规...', 'alert'], ['genesis', 'Genesis'], ['xwin', 'Enginee...'], ['xwin', 'Progress'], ['xwin', 'Graphic...', 'active'],
      ['xwin', 'Dialog ...', 'alert'], ['xwin', 'Drill To...'], ['xwin', '8saz10...'], ['doc', 'SAZ1-7...'], ['xls', '8SAZ10...'], ['xls', '8SAZ10...'], ['genesis', 'CAM_G...']];
    const looks = { alert: 'bg-[#9c551e] border-[#f7730c]', active: 'bg-[#333] border-[#76b9ed]' };
    document.getElementById('tasks').innerHTML = tasks.map(([icon, name, look]) => `
      <div class="w-[98px] shrink-0 ${look ? '' : 'px-1'}">
        <button class="flex h-full w-full items-center gap-[5px] border-b-2 whitespace-nowrap ${look ? 'pl-[6px] ' + looks[look] : 'pl-[2px] border-[#76b9ed]'}"><svg class="size-[22px] shrink-0"><use href="#${icon}"/></svg>${name}</button>
      </div>`).join('');
  </script>

</body>
</html>
